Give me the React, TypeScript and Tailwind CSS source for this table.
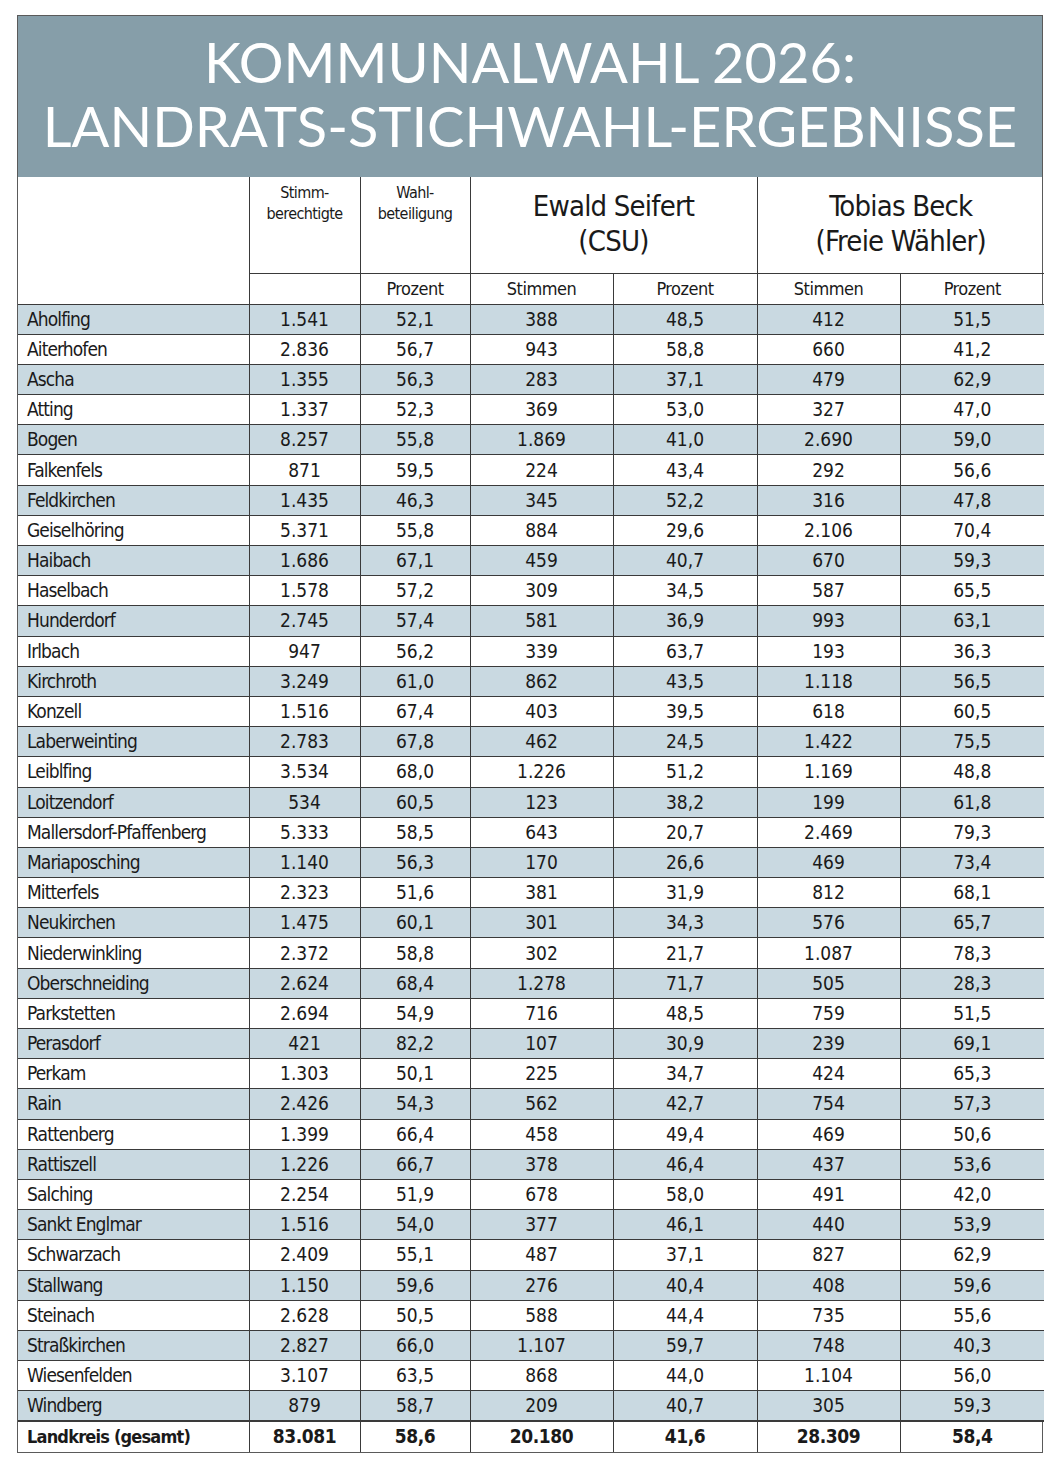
import React from "react"

const rows: string[][] = [
  ["Aholfing", "1.541", "52,1", "388", "48,5", "412", "51,5"],
  ["Aiterhofen", "2.836", "56,7", "943", "58,8", "660", "41,2"],
  ["Ascha", "1.355", "56,3", "283", "37,1", "479", "62,9"],
  ["Atting", "1.337", "52,3", "369", "53,0", "327", "47,0"],
  ["Bogen", "8.257", "55,8", "1.869", "41,0", "2.690", "59,0"],
  ["Falkenfels", "871", "59,5", "224", "43,4", "292", "56,6"],
  ["Feldkirchen", "1.435", "46,3", "345", "52,2", "316", "47,8"],
  ["Geiselhöring", "5.371", "55,8", "884", "29,6", "2.106", "70,4"],
  ["Haibach", "1.686", "67,1", "459", "40,7", "670", "59,3"],
  ["Haselbach", "1.578", "57,2", "309", "34,5", "587", "65,5"],
  ["Hunderdorf", "2.745", "57,4", "581", "36,9", "993", "63,1"],
  ["Irlbach", "947", "56,2", "339", "63,7", "193", "36,3"],
  ["Kirchroth", "3.249", "61,0", "862", "43,5", "1.118", "56,5"],
  ["Konzell", "1.516", "67,4", "403", "39,5", "618", "60,5"],
  ["Laberweinting", "2.783", "67,8", "462", "24,5", "1.422", "75,5"],
  ["Leiblfing", "3.534", "68,0", "1.226", "51,2", "1.169", "48,8"],
  ["Loitzendorf", "534", "60,5", "123", "38,2", "199", "61,8"],
  ["Mallersdorf-Pfaffenberg", "5.333", "58,5", "643", "20,7", "2.469", "79,3"],
  ["Mariaposching", "1.140", "56,3", "170", "26,6", "469", "73,4"],
  ["Mitterfels", "2.323", "51,6", "381", "31,9", "812", "68,1"],
  ["Neukirchen", "1.475", "60,1", "301", "34,3", "576", "65,7"],
  ["Niederwinkling", "2.372", "58,8", "302", "21,7", "1.087", "78,3"],
  ["Oberschneiding", "2.624", "68,4", "1.278", "71,7", "505", "28,3"],
  ["Parkstetten", "2.694", "54,9", "716", "48,5", "759", "51,5"],
  ["Perasdorf", "421", "82,2", "107", "30,9", "239", "69,1"],
  ["Perkam", "1.303", "50,1", "225", "34,7", "424", "65,3"],
  ["Rain", "2.426", "54,3", "562", "42,7", "754", "57,3"],
  ["Rattenberg", "1.399", "66,4", "458", "49,4", "469", "50,6"],
  ["Rattiszell", "1.226", "66,7", "378", "46,4", "437", "53,6"],
  ["Salching", "2.254", "51,9", "678", "58,0", "491", "42,0"],
  ["Sankt Englmar", "1.516", "54,0", "377", "46,1", "440", "53,9"],
  ["Schwarzach", "2.409", "55,1", "487", "37,1", "827", "62,9"],
  ["Stallwang", "1.150", "59,6", "276", "40,4", "408", "59,6"],
  ["Steinach", "2.628", "50,5", "588", "44,4", "735", "55,6"],
  ["Straßkirchen", "2.827", "66,0", "1.107", "59,7", "748", "40,3"],
  ["Wiesenfelden", "3.107", "63,5", "868", "44,0", "1.104", "56,0"],
  ["Windberg", "879", "58,7", "209", "40,7", "305", "59,3"],
]

const total = ["Landkreis (gesamt)", "83.081", "58,6", "20.180", "41,6", "28.309", "58,4"]

const cell = "border border-[#3a3a3a]"

export default function App() {
  return (
    <div className="min-h-[1460px] bg-white pt-[15px] pl-[17px] font-['DejaVu_Sans_Condensed',sans-serif] text-[#1a1a1a]">
      <div className="w-[1026px] border border-[#5a5a5a]">
        {/* Title */}
        <div className="h-[161px] bg-[#869ea9] pt-[14px] text-center font-['Lato',sans-serif] text-[56px] leading-[64px] text-white">
          <div>KOMMUNALWAHL 2026:</div>
          <div>LANDRATS-STICHWAHL-ERGEBNISSE</div>
        </div>

        <table className="w-full table-fixed border-collapse">
          <colgroup>
            <col className="w-[231px]" />
            <col className="w-[111px]" />
            <col className="w-[110px]" />
            <col className="w-[143px]" />
            <col className="w-[144px]" />
            <col className="w-[143px]" />
            <col className="w-[144px]" />
          </colgroup>
          <thead>
            <tr className="h-[96px]">
              <th rowSpan={2} className={`${cell} border-l-0 border-t-0`}></th>
              <th className={`${cell} border-t-0 align-top pt-[5px] text-[16px] font-normal leading-[21px] tracking-[-0.6px]`}>
                Stimm-
                <br />
                berechtigte
              </th>
              <th className={`${cell} border-t-0 align-top pt-[5px] text-[16px] font-normal leading-[21px] tracking-[-0.6px]`}>
                Wahl-
                <br />
                beteiligung
              </th>
              <th colSpan={2} className={`${cell} border-t-0 pb-[2px] text-[29px] font-normal leading-[35px] tracking-[-0.8px]`}>
                Ewald Seifert
                <br />
                (CSU)
              </th>
              <th colSpan={2} className={`${cell} border-r-0 border-t-0 pb-[2px] text-[29px] font-normal leading-[35px] tracking-[-0.8px]`}>
                Tobias Beck
                <br />
                (Freie Wähler)
              </th>
            </tr>
            <tr className="h-[31px] text-[18px] tracking-[-0.5px]">
              <th className={`${cell} font-normal`}></th>
              <th className={`${cell} font-normal`}>Prozent</th>
              <th className={`${cell} font-normal`}>Stimmen</th>
              <th className={`${cell} font-normal`}>Prozent</th>
              <th className={`${cell} font-normal`}>Stimmen</th>
              <th className={`${cell} border-r-0 font-normal`}>Prozent</th>
            </tr>
          </thead>
          <tbody className="text-[19px] leading-none">
            {rows.map((r, i) => (
              <tr key={r[0]} className={`h-[30.2px] ${i % 2 === 0 ? "bg-[#c9d9e1]" : "bg-white"}`}>
                <td className={`${cell} border-l-0 pl-[9px] tracking-[-0.9px]`}>{r[0]}</td>
                {r.slice(1).map((v, j) => (
                  <td key={j} className={`${cell} text-center ${j === 5 ? "border-r-0" : ""}`}>
                    {v}
                  </td>
                ))}
              </tr>
            ))}
            <tr className="h-[30.6px] font-bold">
              <td className={`${cell} border-b-0 border-l-0 border-t-2 pl-[9px] text-[18px] tracking-[-0.8px]`}>{total[0]}</td>
              {total.slice(1).map((v, j) => (
                <td key={j} className={`${cell} border-b-0 border-t-2 text-center tracking-[-0.4px] ${j === 5 ? "border-r-0" : ""}`}>
                  {v}
                </td>
              ))}
            </tr>
          </tbody>
        </table>
      </div>
    </div>
  )
}
